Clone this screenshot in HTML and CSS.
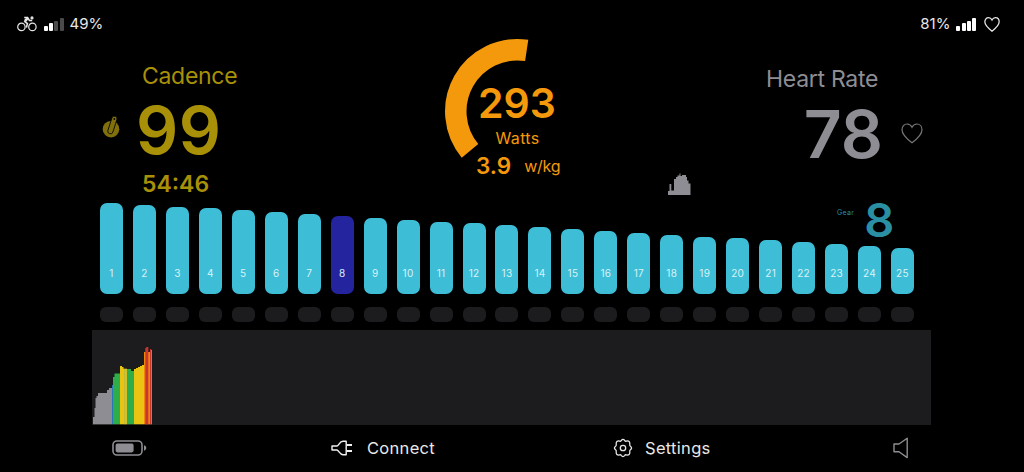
FILE: index.html
```
<!DOCTYPE html>
<html lang="en">
<head>
  <meta charset="UTF-8">
  <meta name="viewport" content="width=device-width, initial-scale=1.0">
  <title>Ride</title>
  <link rel="stylesheet" href="styles.css">
</head>
<body>
  <header class="status-bar">
    <div class="status-group">
      <svg class="bike-icon" viewBox="0 0 20 16" fill="none" stroke="#e6e6e6" stroke-width="1.2">
        <circle cx="4.4" cy="10.9" r="3.7"/>
        <circle cx="15.4" cy="10.9" r="3.7"/>
        <path d="M7.2 5.2L10.4 7.6L9.4 11.6" stroke-width="1.6"/>
        <path d="M7.2 1.6H10.6L12.4 4.4H15.2" stroke-width="1.5"/>
        <path d="M10.8 1.8L8 5.2" stroke-width="2.6"/>
        <circle cx="15" cy="1.9" r="1" fill="#e6e6e6"/>
      </svg>
      <div class="signal"><i></i><i></i><i class="off"></i><i class="off"></i></div>
      <span>49%</span>
    </div>
    <div class="status-group">
      <span>81%</span>
      <div class="signal"><i></i><i></i><i></i><i></i></div>
      <svg class="heart-icon" viewBox="0 0 22 21" fill="none" stroke="#e6e6e6" stroke-width="1.8">
        <path d="M11 19.8C7 16.8 1 12.2 1 6.8C1 3.4 3.2 1 6.1 1C8.3 1 10 2.3 11 4.3C12 2.3 13.7 1 15.9 1C18.8 1 21 3.4 21 6.8C21 12.2 15 16.8 11 19.8Z"/>
      </svg>
    </div>
  </header>

  <main>
    <section class="metrics">
      <div class="cadence">
        <svg class="crank-icon" viewBox="0 0 20 24">
          <circle cx="9" cy="14.2" r="8.3" fill="#806f0b"/>
          <path d="M5.9 15.4L9.9 3A2.6 2.6 0 0 1 14.9 4.6L10.9 17A2.6 2.6 0 0 1 5.9 15.4Z" fill="#806f0b" stroke="#080700" stroke-width=".9"/>
          <circle cx="12.4" cy="4" r=".9" fill="#080700"/>
        </svg>
        <div>
          <div class="label">Cadence</div>
          <div class="big">99</div>
          <div class="timer">54:46</div>
        </div>
      </div>
      <div class="power">
        <svg class="gauge" viewBox="0 0 146 146" fill="none" stroke="#f4990c" stroke-width="21.5">
          <path d="M25 112.8A61.7 61.7 0 0 1 81.7 12.4"/>
        </svg>
        <div class="watts">293</div>
        <div class="unit">Watts</div>
        <div class="ratio"><b>3.9</b><span>w/kg</span></div>
      </div>
      <div class="heart">
        <div>
          <div class="label">Heart Rate</div>
          <div class="big">78</div>
        </div>
        <svg class="heart-big" viewBox="0 0 22 21" fill="none" stroke="#77767b" stroke-width="1.2">
          <path d="M11 19.8C7 16.8 1 12.2 1 6.8C1 3.4 3.2 1 6.1 1C8.3 1 10 2.3 11 4.3C12 2.3 13.7 1 15.9 1C18.8 1 21 3.4 21 6.8C21 12.2 15 16.8 11 19.8Z"/>
        </svg>
        <svg class="mini-chart" viewBox="0 0 23 22" fill="#8e8d94">
          <path d="M0 22V18H1.5V11H3.3V17.5H6V6H8V4H9.5V2.5H11.5V.5H12.5V3H14V2H18V4H19V7.5H20.5V10.5H22.5V22Z"/>
        </svg>
      </div>
    </section>

    <section class="gears">
      <div class="gear-row" id="gear-row"></div>
      <div class="gear-now"><span>Gear</span><b>8</b></div>
    </section>

    <section class="history">
      <svg class="history-chart" viewBox="0 0 64 95">
        <path fill="#8e8d94" d="M1 94.3V87H2.5V78H3.5V68H4.5V66H6V63H15V60H17V58H20V94.3Z"/>
        <path fill="#2876b5" d="M20 94.3V55H21V94.3Z"/>
        <path fill="#2ead4b" d="M21 94.3V47H22.5V43.5H28V94.3Z"/>
        <path fill="#e9c412" d="M28 94.3V36H30V37H31.5V38.7H35V94.3Z"/>
        <path fill="#b5b94a" d="M32 94.3V38.7H32.7V94.3ZM33.7 94.3V38.7H34.4V94.3Z"/>
        <path fill="#2ead4b" d="M35 94.3V39H39V41H42V94.3Z"/>
        <path fill="#e9c412" d="M42 94.3V39H44V38H46V37H48V36H50V35H52V94.3Z"/>
        <path fill="#ef850f" d="M52 94.3V22H58V20H60V94.3Z"/>
        <path fill="#c93632" d="M53.3 94.3V18H54.3V17H56.3V94.3ZM58 94.3V19H59.2V94.3Z"/>
      </svg>
    </section>
  </main>

  <footer class="toolbar">
    <svg class="battery-icon" viewBox="0 0 35 16" fill="none">
      <rect x="1" y="1" width="29" height="14" rx="4" stroke="#8e8d94" stroke-width="1.6"/>
      <rect x="3.6" y="3.6" width="18" height="8.8" rx="1.8" fill="#8e8d94"/>
      <path d="M32 5.3C35 6 35 10 32 10.7Z" fill="#8e8d94"/>
    </svg>
    <a class="connect">
      <svg class="plug-icon" viewBox="0 0 22 16" fill="none" stroke="#f0f0f0" stroke-width="1.4">
        <path d="M1 6H6C8 5.5 8.5 1.3 12 1.3H15.2V14.7H12C8.5 14.7 8 10.5 6 10H1Z" stroke-linejoin="round"/>
        <path d="M15.5 5H21M15.5 11H21" stroke-width="2"/>
      </svg>
      Connect
    </a>
    <a class="settings">
      <svg class="cog-icon" viewBox="0 0 20 20" fill="none" stroke="#e6e6e6" stroke-width="1.3" stroke-linejoin="round">
        <path d="M8.2 2.6Q10 .2 11.8 2.6Q12.4 3.6 13.9 3Q16.9 2.7 16.8 5.8Q16.4 7.4 17.4 8.2Q19.8 10 17.4 11.8Q16.4 12.6 16.8 14.2Q16.9 17.3 13.9 17Q12.4 16.4 11.8 17.4Q10 19.8 8.2 17.4Q7.6 16.4 6.1 17Q3.1 17.3 3.2 14.2Q3.6 12.6 2.6 11.8Q.2 10 2.6 8.2Q3.6 7.4 3.2 5.8Q3.1 2.7 6.1 3Q7.6 3.6 8.2 2.6Z"/>
        <circle cx="10" cy="10" r="2.7"/>
      </svg>
      Settings
    </a>
    <svg class="speaker-icon" viewBox="0 0 16 22" fill="none" stroke="#8e8d94" stroke-width="1.4" stroke-linejoin="round">
      <path d="M1 7H6L14.2 1.2V20.6L6 14.8H1Z"/>
    </svg>
  </footer>

  <script>
    const GEARS = 25;
    const current = 8;
    const row = document.getElementById('gear-row');

    // bars get shorter towards the highest gear
    for (let i = 1; i <= GEARS; i++) {
      const height = 91.3 - (i - 1) * 1.88;
      const gear = document.createElement('div');
      gear.className = 'gear' + (i === current ? ' active' : '');
      gear.innerHTML = `<div class="bar" style="height: ${height.toFixed(1)}px">${i}</div><div class="pill"></div>`;
      row.appendChild(gear);
    }
  </script>
</body>
</html>
```
FILE: styles.css
```
* {
  box-sizing: border-box;
}
body {
  margin: 0;
  height: 472px;
  overflow: hidden;
  background: #000;
  color: #e8e8e8;
  font-family: Inter, "Liberation Sans", sans-serif;
  display: flex;
  flex-direction: column;
}
svg {
  display: block;
  flex: none;
}
.status-bar {
  height: 38px;
  padding: 9px 24px 0 17px;
  display: flex;
  justify-content: space-between;
  align-items: flex-start;
  font-size: 15px;
  line-height: 30px;
}
.status-group {
  display: flex;
  align-items: center;
  gap: 6px;
}
.bike-icon {
  width: 20px;
  height: 16px;
  margin-right: 1px;
}
.heart-icon {
  width: 16px;
  height: 15px;
  margin-left: 2px;
}
.signal {
  display: flex;
  align-items: flex-end;
  gap: 1.2px;
  height: 13px;
}
.signal i {
  width: 4px;
  height: 5px;
  border-radius: 1px;
  background: #fff;
}
.signal i:nth-child(2) {
  height: 7.5px;
}
.signal i:nth-child(3) {
  height: 10px;
}
.signal i:nth-child(4) {
  height: 13px;
}
.signal .off {
  background: #4a4a4a;
}
.metrics {
  height: 164px;
  display: grid;
  grid-template-columns: 445px 146px 433px;
}
.label {
  font-size: 23px;
  line-height: 30px;
  letter-spacing: -0.3px;
}
.big {
  font-size: 66px;
  line-height: 70px;
  font-weight: 600;
}
.cadence {
  padding: 23px 0 0 102px;
  display: flex;
  color: #a89008;
}
.cadence .label {
  padding-left: 20px;
}
.cadence .big {
  margin: 4px 0 4px 14px;
  letter-spacing: 0.5px;
}
.crank-icon {
  width: 20px;
  height: 24px;
  margin-top: 54px;
}
.timer {
  padding-left: 20px;
  font-size: 23px;
  line-height: 30px;
  font-weight: 600;
}
.power {
  position: relative;
  padding-top: 45px;
  text-align: center;
  color: #f4990c;
}
.gauge {
  position: absolute;
  left: 0;
  top: 0;
  width: 146px;
  height: 146px;
}
.watts {
  position: relative;
  padding-right: 2px;
  font-size: 41px;
  line-height: 40px;
  font-weight: 600;
}
.unit {
  padding-right: 1px;
  font-size: 16px;
  line-height: 30px;
  letter-spacing: 0.3px;
}
.ratio {
  display: flex;
  gap: 13px;
  padding-left: 31px;
  font-size: 16px;
  line-height: 26px;
}
.ratio b {
  font-size: 22.5px;
  font-weight: 600;
}
.ratio span {
  letter-spacing: -0.2px;
}
.heart {
  display: grid;
  grid-template-columns: 291px 22px;
  align-content: start;
  column-gap: 19px;
  padding-top: 26px;
  color: #8e8d94;
  text-align: right;
}
.heart .label {
  padding-right: 4px;
}
.heart .big {
  margin: 5px -1px 0 0;
}
.heart-big {
  width: 22px;
  height: 21px;
  margin-top: 59px;
}
.mini-chart {
  width: 23px;
  height: 22px;
  margin: 4px 0 0 77px;
}
.gears {
  position: relative;
  height: 128px;
  padding: 0 105px 0 95px;
}
.gear-row {
  display: grid;
  grid-template-columns: repeat(25, 1fr);
}
.gear {
  height: 119.5px;
  display: flex;
  flex-direction: column;
  justify-content: flex-end;
  align-items: center;
}
.bar {
  width: 23px;
  border-radius: 7px;
  background: #3ebdd6;
  color: #d8f3f8;
  font-size: 10px;
  line-height: 12px;
  letter-spacing: 0.3px;
  display: flex;
  align-items: flex-end;
  justify-content: center;
  padding-bottom: 15.5px;
}
.active .bar {
  background: #25249f;
}
.pill {
  width: 23px;
  height: 15px;
  margin-top: 12.5px;
  border-radius: 6px;
  background: #1c1c1e;
}
.gear-now {
  position: absolute;
  left: 837px;
  top: -1px;
  display: flex;
  gap: 10px;
  color: #2b8fa3;
}
.gear-now span {
  font-size: 7px;
  line-height: 24px;
  letter-spacing: 0.3px;
}
.gear-now b {
  font-size: 47px;
  line-height: 38px;
  font-weight: 600;
}
.history {
  width: 839px;
  height: 94.5px;
  margin-left: 92px;
  background: #1c1c1e;
}
.history-chart {
  width: 64px;
  height: 95px;
}
.toolbar {
  height: 47px;
  padding: 0 115px 0 112px;
  display: grid;
  grid-template-columns: 219px 282px 280px 16px;
  align-items: center;
  font-size: 16.5px;
  letter-spacing: 0.3px;
}
.battery-icon {
  width: 35px;
  height: 16px;
}
.connect,
.settings {
  display: flex;
  align-items: center;
}
.connect {
  gap: 14px;
}
.settings {
  gap: 12px;
}
.plug-icon {
  width: 22px;
  height: 16px;
}
.cog-icon {
  width: 20px;
  height: 20px;
}
.speaker-icon {
  width: 16px;
  height: 22px;
}
```
